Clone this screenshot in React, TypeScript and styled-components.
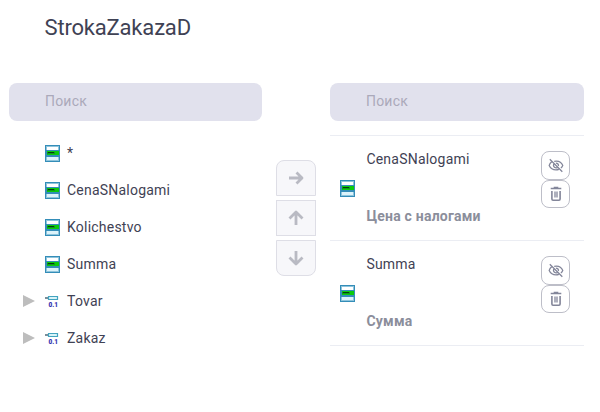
import React from "react";
import styled, { createGlobalStyle } from "styled-components";

const GlobalStyle = createGlobalStyle`
  * { box-sizing: border-box; }
  body {
    margin: 0;
    background: #fff;
    color: #3f4254;
    font: 400 14px/20px Roboto, sans-serif;
    letter-spacing: 0.22px;
  }
`;

const Page = styled.main`
  width: 600px;
  height: 412px;
  padding: 13px 16px 0 9px;
  overflow: hidden;
`;

const Title = styled.h1`
  margin: 0 0 40px 35.5px;
  font-size: 22px;
  line-height: 30px;
  font-weight: 400;
  letter-spacing: -0.18px;
`;

const Columns = styled.div`
  display: grid;
  grid-template-columns: 253px 40px 254px;
  column-gap: 14px;
  align-items: start;
`;

const Search = styled.input`
  display: block;
  width: 100%;
  height: 38px;
  padding: 0 36px 2px;
  border: 0;
  border-radius: 8px;
  outline: 0;
  background: #e1e1ed;
  font: inherit;
  letter-spacing: 0.2px;
  &::placeholder { color: #aba9ba; opacity: 1; }
`;

const Tree = styled.ul`
  list-style: none;
  margin: 14px 0 0;
  padding: 0;
`;

const TreeRow = styled.li`
  display: grid;
  grid-template-columns: 22px 15px 1fr;
  align-items: center;
  height: 37px;
  padding-left: 14px;
`;

const TreeName = styled.span`
  padding: 0 0 2px 7px;
`;

const Arrow = styled.span`
  width: 0;
  height: 0;
  margin-bottom: 1px;
  border: solid transparent;
  border-width: 6px 0 6px 12px;
  border-left-color: #bdbdbd;
`;

const Movers = styled.div`
  display: flex;
  flex-direction: column;
  gap: 4px;
  margin-top: 77px;
`;

const MoveButton = styled.button<{ $radius?: string }>`
  display: flex;
  align-items: center;
  justify-content: center;
  width: 40px;
  height: 36px;
  padding: 0;
  border: 1px solid #dedee6;
  border-radius: ${(p) => p.$radius ?? "0"};
  background: #f7f7fa;
  color: #b9bac3;
`;

const Selected = styled.ul`
  list-style: none;
  margin: 14px 0 0;
  padding: 0;
  border-top: 1px solid #ebedf3;
`;

const SelectedRow = styled.li`
  display: grid;
  grid-template-columns: 26.4px 1fr 29px;
  height: 105px;
  padding: 13px 14px 0 10px;
  border-bottom: 1px solid #ebedf3;
`;

const SelectedIcon = styled.span`
  padding-top: 31px;
`;

const Labels = styled.div`
  display: flex;
  flex-direction: column;
  gap: 37px;
`;

const Caption = styled.strong`
  font-weight: 700;
  color: #8b8e9b;
`;

const Actions = styled.div`
  display: flex;
  flex-direction: column;
  padding-top: 2px;
`;

const ActionButton = styled.button<{ $height: number }>`
  display: flex;
  align-items: center;
  justify-content: center;
  width: 29px;
  height: ${(p) => p.$height}px;
  padding: 0;
  border: 1px solid #bdbec8;
  border-radius: 8px;
  background: #fff;
  color: #83869a;
`;

const Icon = styled.svg`
  display: block;
  flex: none;
`;

const FieldIcon = () => (
  <Icon width="15" height="17" viewBox="0 0 15 17" shapeRendering="crispEdges">
    <path fill="#348db8" d="M0 0h15v17H0z" />
    <path fill="#8ec4dc" d="M1 1h13v4H1zM1 12h13v4H1z" />
    <path fill="#fff" d="M2 2h11v3H2z" />
    <path fill="#dcf3fa" d="M2 12h11v3H2z" />
    <path fill="#28a060" d="M2 5h12v6H2z" />
    <path fill="#348db8" d="M1 5h13v1H1zM1 10h13v1H1z" />
    <path fill="#0bcb0b" d="M2 6h12v4H2z" />
    <path fill="#0e9a18" d="M2 7h8v2H2z" />
    <path fill="#063d0e" d="M3 7h6v1H3z" />
  </Icon>
);

const LinkIcon = () => (
  <Icon width="15" height="17" viewBox="0 0 15 17">
    <path fill="#798e99" d="M0 4h3v2H0z" />
    <path fill="#d9f3f8" stroke="#43a3bf" strokeWidth="1.2" d="M3.5 3.5h9v3h-9z" />
    <text x="3.5" y="14" fill="#3434b0" fontFamily="Roboto, sans-serif" fontWeight="900" fontSize="6.5" letterSpacing="0">0.1</text>
  </Icon>
);

const moverPaths = {
  right: "M1 8H14M8.5 2.5L14 8L8.5 13.5",
  up: "M8 15V2M1.5 8.5L8 2L14.5 8.5",
  down: "M8 1V14M1.5 7.5L8 14L14.5 7.5",
};

const MoveIcon = ({ direction }: { direction: keyof typeof moverPaths }) => (
  <Icon width="16" height="16" viewBox="0 0 16 16" fill="none" stroke="currentColor" strokeWidth="2.8" strokeLinejoin="round">
    <path d={moverPaths[direction]} />
  </Icon>
);

const HideIcon = () => (
  <Icon width="16" height="16" viewBox="0 0 16 16" fill="none" stroke="currentColor" strokeWidth="1.3">
    <path d="M3.7 3.8C2.5 4.8 1.7 5.8 1.2 7.4C2.4 10.1 4.9 11.8 8 11.8C9 11.8 10 11.6 10.9 11.3M6.2 3.3C10.2 2.5 13.5 4.3 14.8 7.4C14.4 8.5 13.8 9.4 12.9 10.1" />
    <path d="M5.7 6.1C5 8 6.1 9.8 8 9.9C8.6 9.9 9.1 9.8 9.5 9.5M7.9 5.1C9.7 5.1 10.8 6.5 10.4 8M1.8 1.2L14.3 13.7" />
  </Icon>
);

const TrashIcon = () => (
  <Icon width="14" height="16" viewBox="0 0 14 16" fill="none" stroke="currentColor" strokeWidth="1.6">
    <path d="M1.7 2.5H12.3M4.7 1.5H9.3M2.9 5V13C2.9 13.8 3.3 14.2 4 14.2H10C10.7 14.2 11.1 13.8 11.1 13V5" />
    <path strokeWidth="1.3" d="M6 5.5V11.5M8 5.5V11.5" />
  </Icon>
);

const fields = [
  { name: "*" },
  { name: "CenaSNalogami" },
  { name: "Kolichestvo" },
  { name: "Summa" },
  { name: "Tovar", link: true },
  { name: "Zakaz", link: true },
];

const selected = [
  { name: "CenaSNalogami", caption: "Цена с налогами" },
  { name: "Summa", caption: "Сумма" },
];

export default function App() {
  return (
    <Page>
      <GlobalStyle />
      <Title>StrokaZakazaD</Title>
      <Columns>
        <section>
          <Search placeholder="Поиск" />
          <Tree>
            {fields.map(({ name, link }) => (
              <TreeRow key={name}>
                {link ? <Arrow /> : <span />}
                {link ? <LinkIcon /> : <FieldIcon />}
                <TreeName>{name}</TreeName>
              </TreeRow>
            ))}
          </Tree>
        </section>
        <Movers>
          <MoveButton $radius="8px 8px 0 0"><MoveIcon direction="right" /></MoveButton>
          <MoveButton><MoveIcon direction="up" /></MoveButton>
          <MoveButton $radius="0 0 8px 8px"><MoveIcon direction="down" /></MoveButton>
        </Movers>
        <section>
          <Search placeholder="Поиск" />
          <Selected>
            {selected.map(({ name, caption }) => (
              <SelectedRow key={name}>
                <SelectedIcon><FieldIcon /></SelectedIcon>
                <Labels>
                  <span>{name}</span>
                  <Caption>{caption}</Caption>
                </Labels>
                <Actions>
                  <ActionButton $height={29}><HideIcon /></ActionButton>
                  <ActionButton $height={28}><TrashIcon /></ActionButton>
                </Actions>
              </SelectedRow>
            ))}
          </Selected>
        </section>
      </Columns>
    </Page>
  );
}
